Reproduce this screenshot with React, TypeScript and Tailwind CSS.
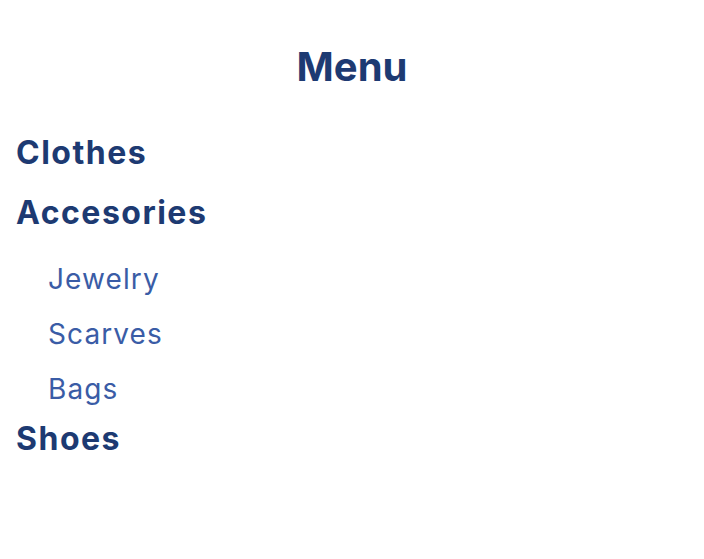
const categories = [
  { name: 'Clothes', items: [] as string[] },
  { name: 'Accesories', items: ['Jewelry', 'Scarves', 'Bags'] },
  { name: 'Shoes', items: [] as string[] },
];

export default function App() {
  return (
    <div className="min-h-screen bg-white font-['Inter','Liberation_Sans',sans-serif]">
      <h1 className="pt-[43px] text-center text-[40px] leading-[48px] font-bold text-[#1d3a72]">
        Menu
      </h1>

      <ul className="mt-[42px] px-4">
        {categories.map((cat, i) => (
          <li key={cat.name} className={i === 0 ? '' : cat.name === 'Shoes' ? 'mt-[10px]' : 'mt-[20px]'}>
            <a href="#" className="block text-[32px] leading-[40px] font-bold tracking-[1.5px] text-[#1d3a72]">
              {cat.name}
            </a>
            {cat.items.length > 0 && (
              <ul className="mt-[26px] flex flex-col gap-[15px] pl-8">
                {cat.items.map((item) => (
                  <li key={item}>
                    <a href="#" className="block text-[28px] leading-[40px] tracking-[1.1px] text-[#3a5ca6]">
                      {item}
                    </a>
                  </li>
                ))}
              </ul>
            )}
          </li>
        ))}
      </ul>
    </div>
  );
}
